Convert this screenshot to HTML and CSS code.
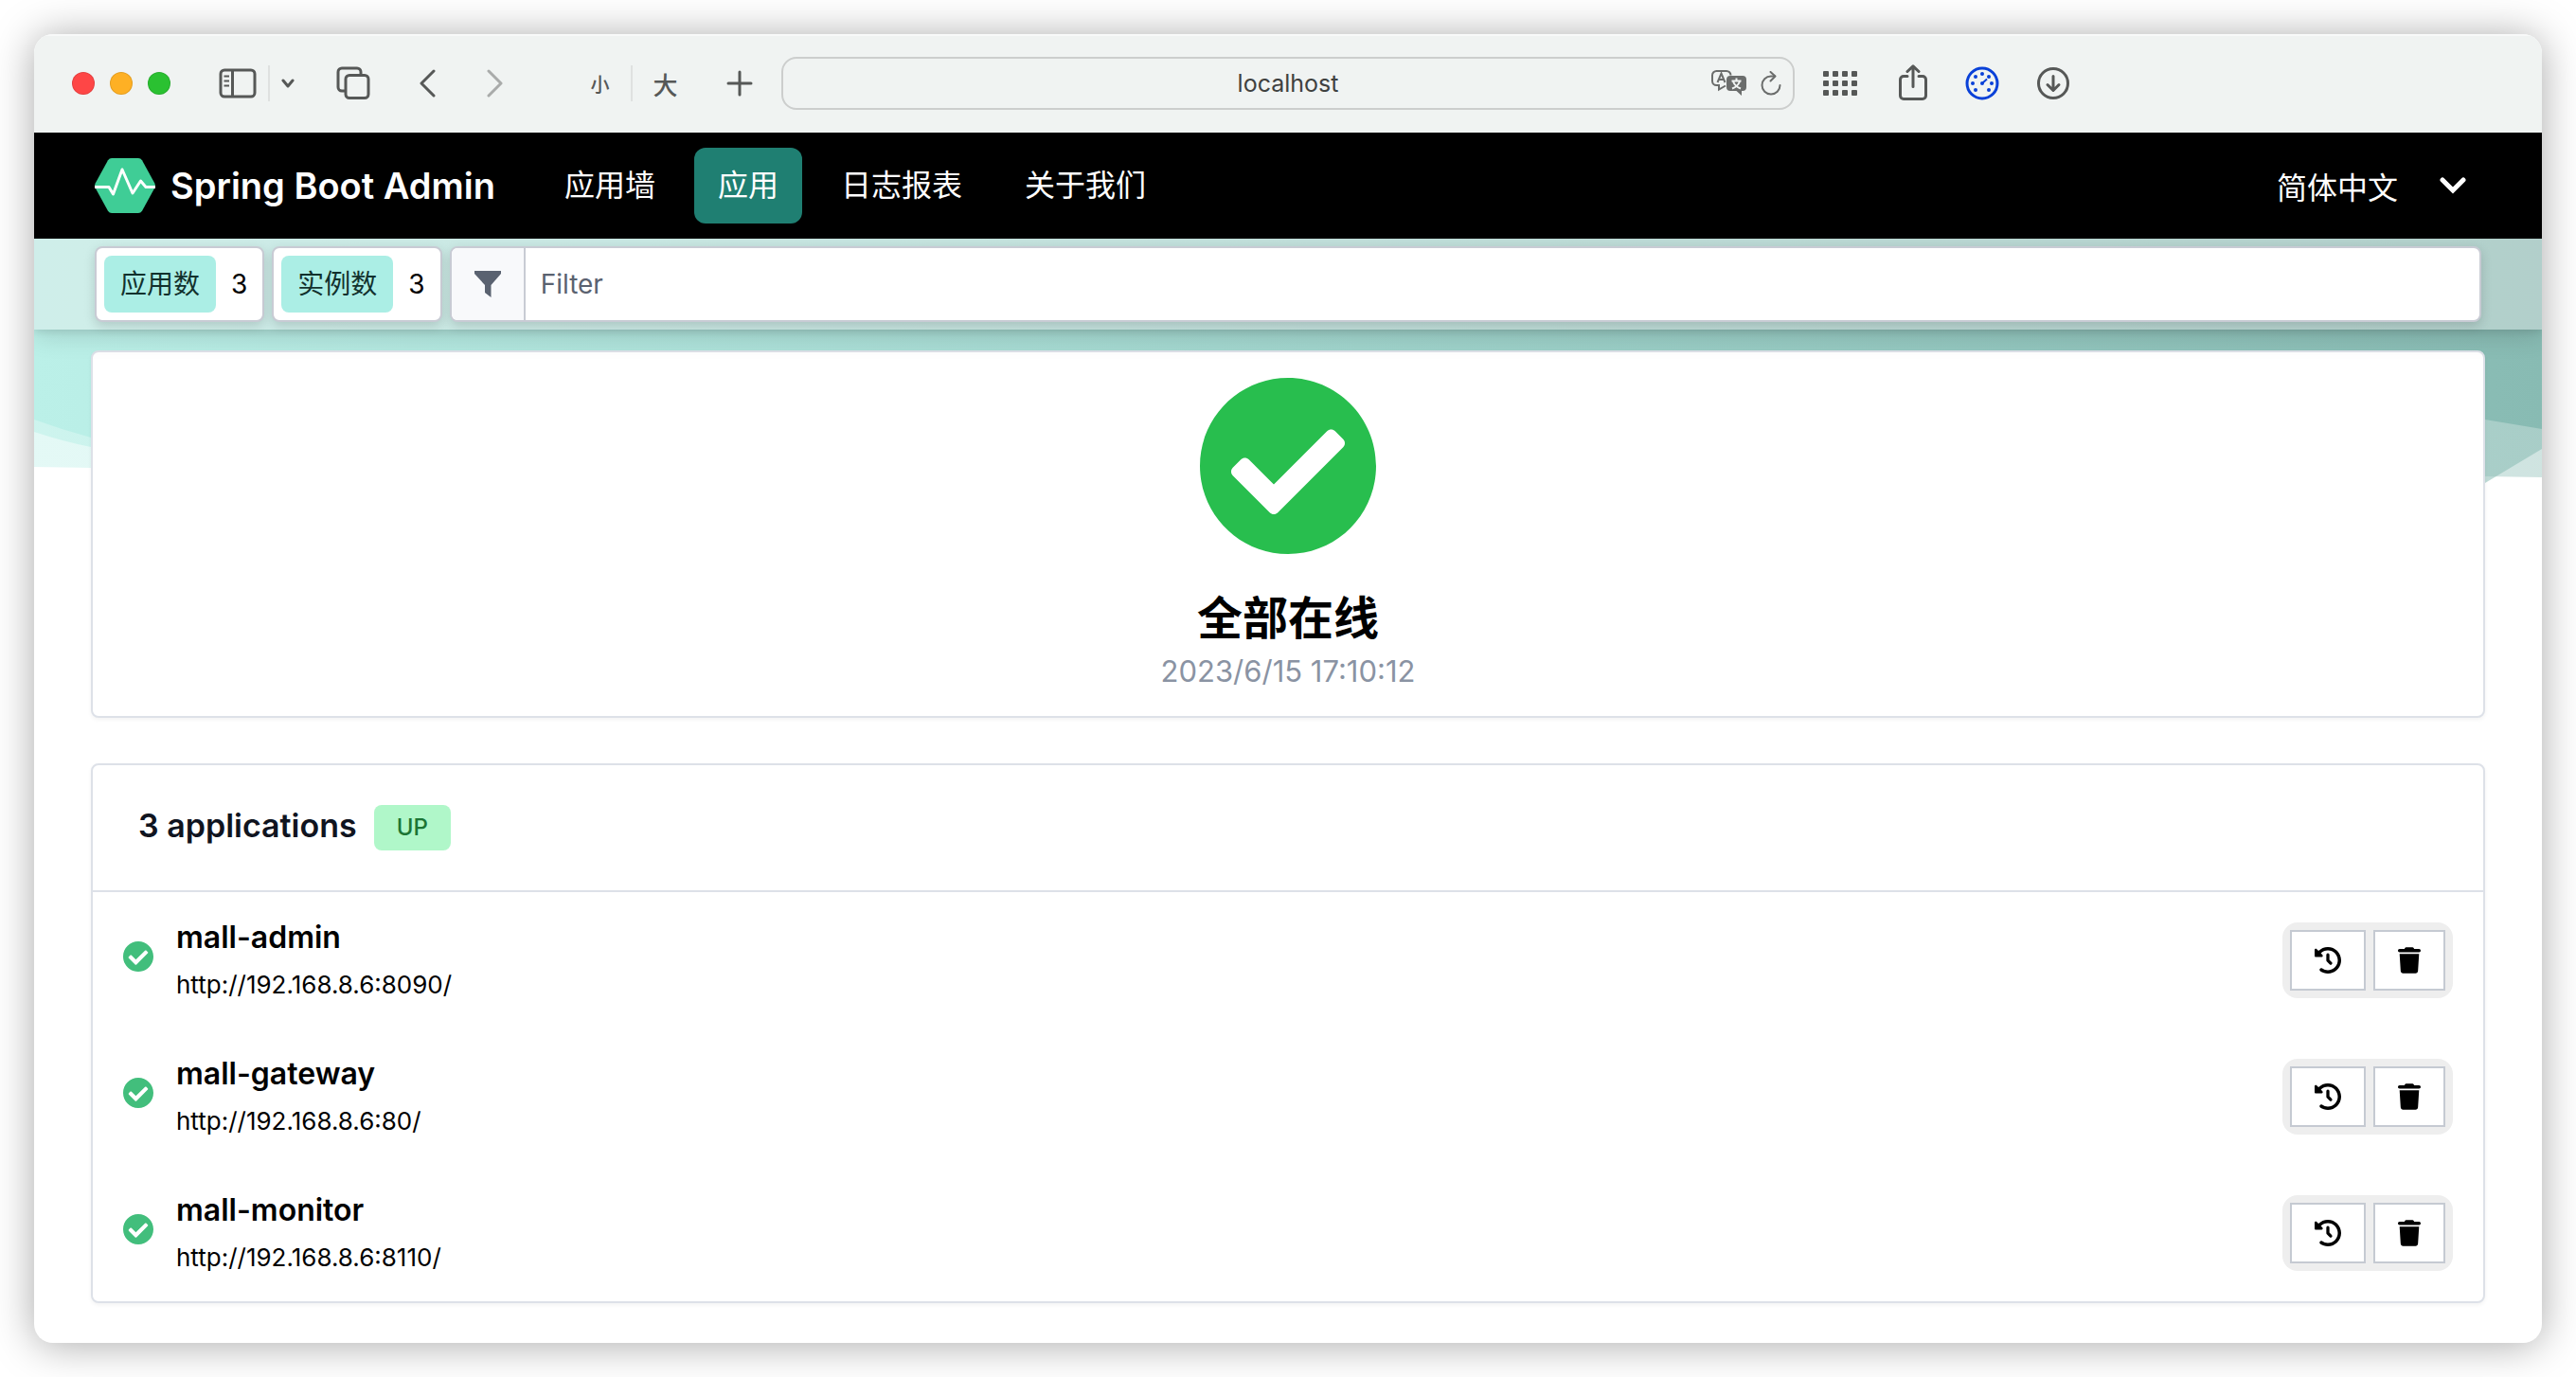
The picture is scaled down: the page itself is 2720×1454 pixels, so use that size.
FILE: index.html
```html
<!DOCTYPE html>
<html lang="zh-CN">
<head>
    <meta charset="utf-8">
    <title>Spring Boot Admin</title>
    <link rel="stylesheet" href="styles.css">
</head>
<body>
    <!-- shared icons -->
    <svg class="sprite" aria-hidden="true">
        <symbol id="icon-check" viewBox="8 8 496 496">
            <path d="M504 256c0 136.967-111.033 248-248 248S8 392.967 8 256 119.033 8 256 8s248 111.033 248 248zM227.314 387.314l184-184c6.248-6.248 6.248-16.379 0-22.627l-22.627-22.627c-6.248-6.249-16.379-6.249-22.628 0L216 308.118l-70.059-70.059c-6.248-6.248-16.379-6.248-22.628 0l-22.627 22.627c-6.248 6.248-6.248 16.379 0 22.627l104 104c6.249 6.249 16.379 6.249 22.628.001z"/>
        </symbol>
        <symbol id="icon-history" viewBox="0 0 512 512">
            <path d="M75 75L41 41C25.9 25.9 0 36.6 0 57.9V168c0 13.3 10.7 24 24 24H134.1c21.4 0 32.1-25.9 17-41l-30.8-30.8C155 85.5 203 64 256 64c106 0 192 86 192 192s-86 192-192 192c-40.8 0-78.6-12.7-109.7-34.4c-14.5-10.1-34.4-6.6-44.6 7.9s-6.6 34.4 7.9 44.6C151.2 495 201.7 512 256 512c141.4 0 256-114.6 256-256S397.4 0 256 0C185.3 0 121.3 28.7 75 75z"/>
            <path d="M256 150V258L310 312" fill="none" stroke="currentColor" stroke-width="60" stroke-linecap="round" stroke-linejoin="round"/>
        </symbol>
        <symbol id="icon-trash" viewBox="0 0 448 512">
            <path d="M135.2 17.7L128 32H32C14.3 32 0 46.3 0 64S14.3 96 32 96H416c17.7 0 32-14.3 32-32s-14.3-32-32-32H320l-7.2-14.3C307.4 6.8 296.3 0 284.2 0H163.8c-12.1 0-23.2 6.8-28.6 17.7zM416 128H32L53.2 467c1.6 25.3 22.6 45 47.9 45H346.9c25.3 0 46.3-19.7 47.9-45L416 128z"/>
        </symbol>
    </svg>

    <div class="window">
        <div class="toolbar">
            <div class="toolbar-left">
                <div class="lights">
                    <button class="light light-red" aria-label="Close"></button>
                    <button class="light light-yellow" aria-label="Minimize"></button>
                    <button class="light light-green" aria-label="Zoom"></button>
                </div>
                <div class="sidebar-tools">
                    <button class="tool" aria-label="Sidebar">
                        <svg width="40" height="32" viewBox="0 0 40 32" fill="none" stroke="currentColor" stroke-width="3">
                            <rect x="2" y="2" width="36" height="28" rx="4"/>
                            <path d="M14.5 2V30"/>
                            <path d="M5.5 8.5H11M5.5 13.5H11M5.5 18.5H11" stroke-width="2"/>
                        </svg>
                    </button>
                    <span class="divider"></span>
                    <button class="tool" aria-label="Tab groups">
                        <svg width="14" height="10" viewBox="0 0 14 10" fill="none" stroke="currentColor" stroke-width="3" stroke-linecap="round" stroke-linejoin="round"><path d="M2 2L7 8L12 2"/></svg>
                    </button>
                </div>
                <button class="tool" aria-label="Tab overview">
                    <svg width="36" height="36" viewBox="0 0 36 36" fill="none" stroke="currentColor" stroke-width="3">
                        <path d="M9 26H6a4 4 0 0 1-4-4V6a4 4 0 0 1 4-4H22a4 4 0 0 1 4 4V9"/>
                        <rect x="10" y="9.5" width="24" height="24" rx="4"/>
                    </svg>
                </button>
                <div class="history-tools">
                    <button class="tool" aria-label="Back">
                        <svg width="18" height="30" viewBox="0 0 18 30" fill="none" stroke="currentColor" stroke-width="3" stroke-linecap="round" stroke-linejoin="round"><path d="M16 2L3 15L16 28"/></svg>
                    </button>
                    <button class="tool tool-off" aria-label="Forward" disabled>
                        <svg width="18" height="30" viewBox="0 0 18 30" fill="none" stroke="currentColor" stroke-width="3" stroke-linecap="round" stroke-linejoin="round"><path d="M2 2L15 15L2 28"/></svg>
                    </button>
                </div>
                <div class="text-tools">
                    <button class="tool text-small">小</button>
                    <span class="divider"></span>
                    <button class="tool text-big">大</button>
                </div>
                <button class="tool" aria-label="New tab">
                    <svg width="28" height="28" viewBox="0 0 28 28" fill="none" stroke="currentColor" stroke-width="3" stroke-linecap="round"><path d="M14 2V26M2 14H26"/></svg>
                </button>
            </div>
            <div class="address">
                <input type="text" value="localhost" aria-label="Address">
                <div class="address-tools">
                    <button class="tool" aria-label="Translate">
                        <svg width="38" height="28" viewBox="0 0 38 28">
                            <path d="M15 16.5L8 20.5V16H5.500a4.500 4.500 0 0 1-4.500-4.500V5.500A4.500 4.500 0 0 1 5.500 1H16a4.500 4.500 0 0 1 4.500 4.500" fill="none" stroke="currentColor" stroke-width="2"/>
                            <path d="M6.5 13L10.500 3.500L14.500 13M8 10H13" fill="none" stroke="currentColor" stroke-width="2"/>
                            <path d="M20 6H33a4 4 0 0 1 4 4V18a4 4 0 0 1-4 4H32V27L26.500 22H20a4 4 0 0 1-4-4V10a4 4 0 0 1 4-4z" fill="currentColor"/>
                            <path d="M26.5 8.5V11M21.500 11.500H31.500M23 12C24.500 16 27 18 31 19.500M30 12C28.500 16 26 18 22 19.500" fill="none" stroke="#f0f3f2" stroke-width="2"/>
                        </svg>
                    </button>
                    <button class="tool" aria-label="Reload">
                        <svg width="22" height="26" viewBox="0 0 22 26" fill="none" stroke="currentColor" stroke-width="2" stroke-linecap="round" stroke-linejoin="round">
                            <path d="M20.5 15A9.5 9.5 0 1 1 11 5.500H15"/><path d="M10.5 1L15.500 5.500L10.500 10.500"/>
                        </svg>
                    </button>
                </div>
            </div>
            <div class="toolbar-right">
                <button class="tool" aria-label="Favorites">
                    <svg width="36" height="26" viewBox="0 0 36 26" fill="currentColor">
                        <rect x="0" y="0" width="6" height="6" rx="1"/><rect x="10" y="0" width="6" height="6" rx="1"/><rect x="20" y="0" width="6" height="6" rx="1"/><rect x="30" y="0" width="6" height="6" rx="1"/>
                        <rect x="0" y="10" width="6" height="6" rx="1"/><rect x="10" y="10" width="6" height="6" rx="1"/><rect x="20" y="10" width="6" height="6" rx="1"/><rect x="30" y="10" width="6" height="6" rx="1"/>
                        <rect x="0" y="20" width="6" height="6" rx="1"/><rect x="10" y="20" width="6" height="6" rx="1"/><rect x="20" y="20" width="6" height="6" rx="1"/><rect x="30" y="20" width="6" height="6" rx="1"/>
                    </svg>
                </button>
                <button class="tool tool-share" aria-label="Share">
                    <svg width="30" height="38" viewBox="0 0 30 38" fill="none" stroke="currentColor" stroke-width="3" stroke-linecap="round" stroke-linejoin="round">
                        <path d="M9 12.5H5a3.5 3.5 0 0 0-3.5 3.5V33A3.5 3.5 0 0 0 5 36.5H25a3.5 3.5 0 0 0 3.5-3.5V16a3.5 3.5 0 0 0-3.5-3.5H21M15 23.5V2M9 7.5L15 1.8L21 7.5"/>
                    </svg>
                </button>
                <button class="tool tool-gauge" aria-label="Speed">
                    <svg width="36" height="36" viewBox="0 0 36 36" fill="currentColor">
                        <circle cx="18" cy="18" r="16" fill="none" stroke="currentColor" stroke-width="3"/>
                        <circle cx="18" cy="8" r="2"/><circle cx="11" cy="11" r="2"/><circle cx="25" cy="11" r="2"/><circle cx="8" cy="18" r="2"/><circle cx="28" cy="18" r="2"/><circle cx="11" cy="25" r="2"/><circle cx="25" cy="25" r="2"/>
                        <circle cx="18" cy="18" r="2"/>
                        <path d="M18 18L23 13.5" stroke="currentColor" stroke-width="2"/>
                    </svg>
                </button>
                <button class="tool" aria-label="Downloads">
                    <svg width="34" height="34" viewBox="0 0 34 34" fill="none" stroke="currentColor" stroke-width="3" stroke-linecap="round" stroke-linejoin="round">
                        <circle cx="17" cy="17" r="15.5"/><path d="M17 9.5V24M11 18.5L17 24.5L23 18.5"/>
                    </svg>
                </button>
            </div>
        </div>

        <nav class="navbar">
            <a class="brand" href="#">
                <svg width="64" height="58" viewBox="0 0 64 58">
                    <path d="M18 0H46Q48.5 0 50 2.2L63.3 26.5Q64.5 29 63.3 31.5L50 55.8Q48.5 58 46 58H18Q15.5 58 14 55.8L0.7 31.5Q-0.5 29 0.7 26.5L14 2.2Q15.5 0 18 0Z" fill="#3fcd96"/>
                    <path d="M0 30.5H15L19.5 38L29 12L40 37L48.500 24L54 30.500H64" fill="none" stroke="#fff" stroke-width="3" stroke-linejoin="round"/>
                </svg>
                <span>Spring Boot Admin</span>
            </a>
            <a class="nav-link" href="#">应用墙</a>
            <a class="nav-link active" href="#">应用</a>
            <a class="nav-link" href="#">日志报表</a>
            <a class="nav-link" href="#">关于我们</a>
            <button class="language">
                简体中文
                <svg width="28" height="18" viewBox="0 0 28 18" fill="none" stroke="currentColor" stroke-width="5" stroke-linecap="round"><path d="M3 3L14 14L25 3"/></svg>
            </button>
        </nav>

        <main class="page">
            <svg class="waves" viewBox="0 0 2648 260" preserveAspectRatio="none" aria-hidden="true">
                <defs>
                    <linearGradient id="wave-color" x1="0" x2="1" y1="0" y2="0">
                        <stop offset="0" stop-color="#bbf0e8"/>
                        <stop offset="1" stop-color="#88bbb3"/>
                    </linearGradient>
                </defs>
                <g fill="url(#wave-color)">
                    <path opacity="0.4" d="M0 0H2648V252L2588 251L60 242L0 241Z"/>
                    <path opacity="0.55" d="M0 0H2648V222L2588 258L1400 200L60 220Q30 214 0 204Z"/>
                    <path d="M0 0H2648V201L2588 191L1400 180L60 210Q30 202 0 191Z"/>
                </g>
            </svg>

            <div class="subnav">
                <div class="counter"><span class="tag">应用数</span><span class="count">3</span></div>
                <div class="counter"><span class="tag">实例数</span><span class="count">3</span></div>
                <div class="filter">
                    <label for="filter" aria-label="Filter">
                        <svg width="28" height="28" viewBox="0 0 28 28" fill="currentColor"><path d="M0 0H28V3L17.5 15V28L11 23V15L0 3Z"/></svg>
                    </label>
                    <input type="text" id="filter" placeholder="Filter">
                </div>
            </div>

            <div class="content">
                <section class="card status">
                    <svg class="status-icon"><use href="#icon-check"/></svg>
                    <h1>全部在线</h1>
                    <p>2023/6/15 17:10:12</p>
                </section>

                <section class="card">
                    <header class="card-header">
                        <h2>3 applications</h2>
                        <span class="badge">UP</span>
                    </header>
                    <ul class="app-list">
                        <li class="app">
                            <svg class="app-icon"><use href="#icon-check"/></svg>
                            <div class="app-info">
                                <h3>mall-admin</h3>
                                <a href="http://192.168.8.6:8090/">http://192.168.8.6:8090/</a>
                            </div>
                            <div class="btn-group">
                                <button aria-label="Journal"><svg width="28" height="28"><use href="#icon-history"/></svg></button>
                                <button aria-label="Remove"><svg width="24" height="28"><use href="#icon-trash"/></svg></button>
                            </div>
                        </li>
                        <li class="app">
                            <svg class="app-icon"><use href="#icon-check"/></svg>
                            <div class="app-info">
                                <h3>mall-gateway</h3>
                                <a href="http://192.168.8.6:80/">http://192.168.8.6:80/</a>
                            </div>
                            <div class="btn-group">
                                <button aria-label="Journal"><svg width="28" height="28"><use href="#icon-history"/></svg></button>
                                <button aria-label="Remove"><svg width="24" height="28"><use href="#icon-trash"/></svg></button>
                            </div>
                        </li>
                        <li class="app">
                            <svg class="app-icon"><use href="#icon-check"/></svg>
                            <div class="app-info">
                                <h3>mall-monitor</h3>
                                <a href="http://192.168.8.6:8110/">http://192.168.8.6:8110/</a>
                            </div>
                            <div class="btn-group">
                                <button aria-label="Journal"><svg width="28" height="28"><use href="#icon-history"/></svg></button>
                                <button aria-label="Remove"><svg width="24" height="28"><use href="#icon-trash"/></svg></button>
                            </div>
                        </li>
                    </ul>
                </section>
            </div>
        </main>
    </div>
</body>
</html>
```
FILE: styles.css
```css
* {
    box-sizing: border-box;
}

body {
    margin: 0;
    padding: 36px;
    background-color: #fff;
    color: #000;
    font-family: Inter, "Noto Sans CJK SC", sans-serif;
    font-size: 28px;
}

h1, h2, h3, p, ul {
    margin: 0;
    padding: 0;
}

button, input {
    font: inherit;
    color: inherit;
}

svg {
    display: block;
}

a {
    color: inherit;
    text-decoration: none;
}

.sprite {
    position: absolute;
    width: 0;
    height: 0;
}

.window {
    background-color: #fff;
    border-radius: 20px;
    box-shadow: 0 2px 44px rgba(0, 0, 0, 0.34);
    overflow: hidden;
}

/* browser toolbar */
.toolbar {
    display: flex;
    align-items: center;
    height: 104px;
    padding-bottom: 2px;
    background-color: #f0f3f2;
    border-top: 2px solid #f8f9f9;
    color: #565857;
}

.toolbar-left {
    flex: 1;
    display: flex;
    align-items: center;
    justify-content: space-between;
    padding: 0 30px 0 40px;
}

.tool {
    padding: 0;
    border: none;
    background: none;
    color: inherit;
}

.tool-off {
    color: #a9abaa;
}

.tool-gauge {
    color: #0a41d8;
}

.lights, .sidebar-tools, .history-tools, .text-tools {
    display: flex;
    align-items: center;
}

.lights {
    gap: 16px;
}

.light {
    width: 24px;
    height: 24px;
    padding: 0;
    border: 1px solid rgba(0, 0, 0, 0.1);
    border-radius: 50%;
}

.light-red {
    background-color: #fe4646;
}

.light-yellow {
    background-color: #feb024;
}

.light-green {
    background-color: #2ac131;
}

.sidebar-tools {
    gap: 12px;
    padding-left: 8px;
}

.divider {
    width: 2px;
    height: 38px;
    background-color: #dfe1e0;
}

.history-tools {
    gap: 54px;
    padding-left: 8px;
}

.text-tools {
    gap: 22px;
    padding: 0 8px 0 48px;
}

.text-small {
    font-size: 20px;
    font-weight: 500;
}

.text-big {
    font-size: 26px;
    font-weight: 500;
}

.address {
    position: relative;
    flex: 0 1 1070px;
}

.address input {
    width: 100%;
    height: 56px;
    border: 2px solid #cccecd;
    border-radius: 16px;
    background: none;
    color: #3f4140;
    font-size: 25px;
    text-align: center;
}

.address-tools {
    position: absolute;
    top: 0;
    right: 14px;
    height: 56px;
    display: flex;
    align-items: center;
    gap: 14px;
    color: #6b6d6c;
}

.toolbar-right {
    flex: 1;
    display: flex;
    align-items: center;
    gap: 40px;
    padding: 0 40px 0 30px;
}

.tool-share {
    padding: 0 0 2px 4px;
}

/* navigation */
.navbar {
    display: flex;
    align-items: center;
    gap: 16px;
    height: 112px;
    padding: 0 64px;
    background-color: #000;
    color: #fff;
    font-size: 32px;
}

.brand {
    display: flex;
    align-items: center;
    gap: 16px;
    margin-right: 32px;
    font-size: 38px;
    font-weight: 600;
}

.nav-link {
    padding: 0 25px;
    border-radius: 12px;
    line-height: 80px;
}

.nav-link.active {
    background-color: #1f7f72;
}

.language {
    display: flex;
    align-items: center;
    gap: 44px;
    margin-left: auto;
    padding: 0 16px;
    border: none;
    background: none;
}

/* page */
.page {
    position: relative;
}

.waves {
    position: absolute;
    top: 0;
    left: 0;
    width: 100%;
    height: 260px;
}

.subnav {
    position: relative;
    z-index: 1;
    display: flex;
    gap: 8px;
    padding: 8px 64px;
    background-color: rgba(235, 235, 235, 0.42);
    box-shadow: 0 8px 24px rgba(0, 0, 0, 0.12), 0 2px 8px rgba(0, 0, 0, 0.1);
}

.counter, .filter {
    display: flex;
    height: 80px;
    border: 2px solid #c8cbd4;
    border-radius: 8px;
    background-color: #fff;
    box-shadow: 0 4px 12px rgba(0, 0, 0, 0.15);
}

.counter {
    align-items: center;
    gap: 16px;
    padding: 0 16px 0 8px;
}

.tag {
    padding: 0 17px;
    border-radius: 8px;
    background-color: #abeee5;
    color: #12312d;
    line-height: 60px;
}

.filter {
    flex: 1;
    overflow: hidden;
}

.filter label {
    display: flex;
    align-items: center;
    padding: 0 24px;
    border-right: 2px solid #c8cbd4;
    background-color: #f8f9fb;
    color: #5a6270;
}

.filter input {
    flex: 1;
    padding: 0 16px;
    border: none;
    background: none;
}

.filter input::placeholder {
    color: #5a6270;
    opacity: 1;
}

.content {
    position: relative;
    display: flex;
    flex-direction: column;
    gap: 48px;
    padding: 22px 60px 42px;
}

.card {
    border: 2px solid #dde1e8;
    border-radius: 8px;
    background-color: #fff;
    box-shadow: 0 2px 4px rgba(0, 0, 0, 0.05);
}

.status {
    display: flex;
    flex-direction: column;
    align-items: center;
    padding: 27px 0 23px;
}

.status-icon {
    width: 186px;
    height: 186px;
    fill: #28be4e;
}

.status h1 {
    margin-top: 36px;
    font-size: 48px;
    line-height: 64px;
}

.status p {
    color: #8a93a3;
    font-size: 31px;
    line-height: 48px;
}

.card-header {
    display: flex;
    align-items: center;
    gap: 18px;
    height: 134px;
    padding: 0 48px;
    border-bottom: 2px solid #dde1e8;
}

.card-header h2 {
    padding-bottom: 6px;
    color: #10141f;
    font-size: 34px;
    font-weight: 600;
}

.badge {
    padding: 0 24px;
    border-radius: 8px;
    background-color: #b0f7c9;
    color: #1c7534;
    font-size: 24px;
    font-weight: 500;
    line-height: 48px;
}

.app-list {
    list-style: none;
}

.app {
    display: flex;
    align-items: center;
    height: 144px;
    padding: 0 32px;
}

.app-icon {
    width: 32px;
    height: 32px;
    margin-bottom: 8px;
    fill: #42be7c;
}

.app-info {
    flex: 1;
    padding: 2px 0 0 24px;
}

.app-info h3 {
    font-size: 32px;
    font-weight: 600;
    line-height: 50px;
}

.app-info a {
    display: block;
    font-size: 26px;
    line-height: 50px;
}

.btn-group {
    display: flex;
    gap: 8px;
    padding: 8px;
    border-radius: 16px;
    background-color: #eee;
}

.btn-group button {
    height: 64px;
    padding: 0 24px;
    border: 2px solid #c5cad2;
    background-color: #fff;
}
```
